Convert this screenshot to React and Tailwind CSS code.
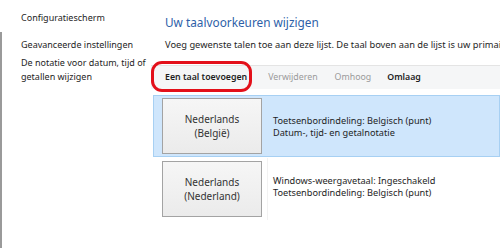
export default function App() {
  const font = { fontFamily: '"Noto Sans", "Open Sans", sans-serif' };
  return (
    <div className="w-[500px] h-[248px] overflow-hidden bg-white flex text-[#1e1e1e]" style={font}>
      {/* Sidebar */}
      <aside className="w-[150px] shrink-0 flex flex-col">
        <div className="pl-[21px] pt-[11px] h-[32px] text-[9px] leading-[14px]">Configuratiescherm</div>
        <div className="flex-1 border-l-2 border-[#9a9a9a] pl-[19px] pt-[6px] text-[9px] leading-[14px]">
          <p>Geavanceerde instellingen</p>
          <p className="mt-[4px]">De notatie voor datum, tijd of getallen wijzigen</p>
        </div>
      </aside>

      {/* Main */}
      <main className="flex-1 min-w-0 flex flex-col overflow-hidden">
        <h1 className="pl-[15px] pt-[14px] h-[38px] text-[11.8px] leading-[16px] text-[#2e5fa8] whitespace-nowrap">
          Uw taalvoorkeuren wijzigen
        </h1>
        <p className="pl-[15px] h-[27px] text-[9.3px] leading-[14px] whitespace-nowrap">
          Voeg gewenste talen toe aan deze lijst. De taal boven aan de lijst is uw primaire taal (de taal die u het liefst gebruikt).
        </p>
        <div className="relative h-[24px] ml-[1px] border-t border-[#e4e4e4] bg-[#f5f6f7] flex items-center pl-[14px] text-[8.8px] whitespace-nowrap">
          <span className="text-[#1e1e1e] font-semibold">Een taal toevoegen</span>
          <span className="text-[#9a9a9a] ml-[21px]">Verwijderen</span>
          <span className="text-[#9a9a9a] ml-[17px]">Omhoog</span>
          <span className="text-[#1e1e1e] font-semibold ml-[16px]">Omlaag</span>
          <div className="absolute left-0 top-[-5px] w-[101px] h-[31px] border-[3px] border-[#e3101a] rounded-[11px]" />
        </div>
        <div className="h-[6px]" />
        <div className="flex-1 flex flex-col ml-[3px]">
          <div className="h-[62px] bg-[#cfe6fc] border border-[#a7d0f3] flex items-center pl-[8px]">
            <div className="w-[100px] h-[56px] border border-[#a3a3a3] bg-gradient-to-b from-[#f6f6f6] to-[#ebebeb] flex items-center justify-center text-center text-[10px] leading-[14px] text-[#333]">
              Nederlands<br />(België)
            </div>
            <div className="pl-[11px] pt-[2px] text-[9.2px] leading-[12px] whitespace-nowrap">
              <p>Toetsenbordindeling: Belgisch (punt)</p>
              <p>Datum-, tijd- en getalnotatie</p>
            </div>
          </div>
          <div className="h-[62px] flex items-center pl-[9px] mt-[1px]">
            <div className="w-[100px] h-[56px] border border-[#a3a3a3] bg-gradient-to-b from-[#f6f6f6] to-[#ebebeb] flex items-center justify-center text-center text-[10px] leading-[14px] text-[#333]">
              Nederlands<br />(Nederland)
            </div>
            <div className="self-stretch w-px bg-[#f2f2f2] ml-[5px]" />
            <div className="pl-[5px] text-[9.2px] leading-[12px] whitespace-nowrap -mt-[5px]">
              <p>Windows-weergavetaal: Ingeschakeld</p>
              <p>Toetsenbordindeling: Belgisch (punt)</p>
            </div>
          </div>
        </div>
      </main>
    </div>
  );
}
